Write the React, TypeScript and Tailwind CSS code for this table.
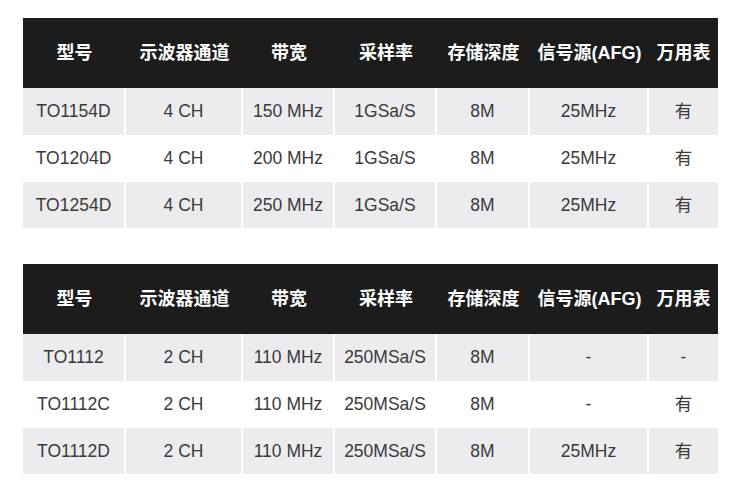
import React from "react"

const headers = ["型号", "示波器通道", "带宽", "采样率", "存储深度", "信号源(AFG)", "万用表"]

const table1 = [
  ["TO1154D", "4 CH", "150 MHz", "1GSa/S", "8M", "25MHz", "有"],
  ["TO1204D", "4 CH", "200 MHz", "1GSa/S", "8M", "25MHz", "有"],
  ["TO1254D", "4 CH", "250 MHz", "1GSa/S", "8M", "25MHz", "有"],
]

const table2 = [
  ["TO1112", "2 CH", "110 MHz", "250MSa/S", "8M", "-", "-"],
  ["TO1112C", "2 CH", "110 MHz", "250MSa/S", "8M", "-", "有"],
  ["TO1112D", "2 CH", "110 MHz", "250MSa/S", "8M", "25MHz", "有"],
]

const cols = "grid grid-cols-[103px_117px_92px_102px_93px_119px_69px]"
const font = { fontFamily: '"Liberation Sans", Arial, "Noto Sans CJK SC", sans-serif' }

function SpecTable({ rows }: { rows: string[][] }) {
  return (
    <div className="w-[695px]">
      <div className={`${cols} h-[70px] bg-[#1c1c1c] text-white text-[18px] font-bold items-center`}>
        {headers.map((h) => (
          <div key={h} className="text-center whitespace-nowrap">
            {h}
          </div>
        ))}
      </div>
      {rows.map((r, i) => (
        <div
          key={r[0]}
          className={`${cols} ${i === 2 ? "h-[46px]" : "h-[47px]"} ${i % 2 === 0 ? "bg-[#ececee]" : "bg-white"} text-[17.5px] text-[#3a3a3a]`}
        >
          {r.map((c, j) => (
            <div
              key={j}
              className={`flex items-center justify-center ${j < 6 ? "border-r-2 border-white" : ""}`}
            >
              {c}
            </div>
          ))}
        </div>
      ))}
    </div>
  )
}

export default function App() {
  return (
    <main className="w-[750px] h-[488px] bg-white pt-[18px] pl-[23px]" style={font}>
      <SpecTable rows={table1} />
      <div className="mt-[36px]">
        <SpecTable rows={table2} />
      </div>
    </main>
  )
}
